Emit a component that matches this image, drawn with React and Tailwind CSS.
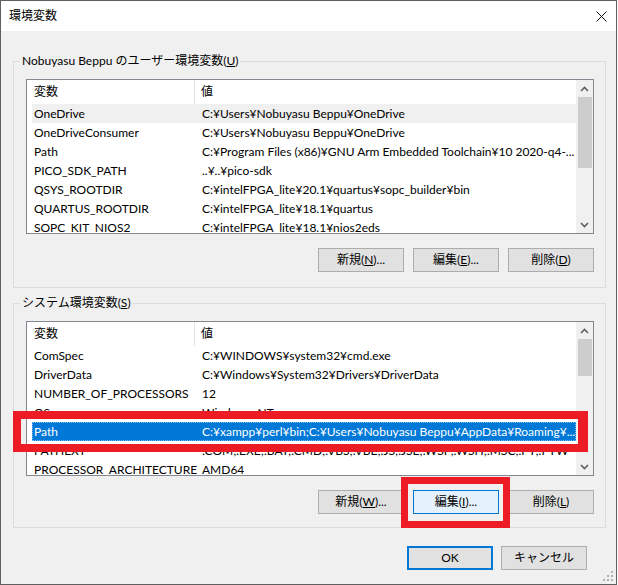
import React from 'react';

const userVars = [
  ['OneDrive', 'C:¥Users¥Nobuyasu Beppu¥OneDrive'],
  ['OneDriveConsumer', 'C:¥Users¥Nobuyasu Beppu¥OneDrive'],
  ['Path', 'C:¥Program Files (x86)¥GNU Arm Embedded Toolchain¥10 2020-q4-...'],
  ['PICO_SDK_PATH', '..¥..¥pico-sdk'],
  ['QSYS_ROOTDIR', 'C:¥intelFPGA_lite¥20.1¥quartus¥sopc_builder¥bin'],
  ['QUARTUS_ROOTDIR', 'C:¥intelFPGA_lite¥18.1¥quartus'],
  ['SOPC_KIT_NIOS2', 'C:¥intelFPGA_lite¥18.1¥nios2eds'],
];

const systemVars = [
  ['ComSpec', 'C:¥WINDOWS¥system32¥cmd.exe'],
  ['DriverData', 'C:¥Windows¥System32¥Drivers¥DriverData'],
  ['NUMBER_OF_PROCESSORS', '12'],
  ['OS', 'Windows_NT'],
  ['Path', 'C:¥xampp¥perl¥bin;C:¥Users¥Nobuyasu Beppu¥AppData¥Roaming¥...'],
  ['PATHEXT', '.COM;.EXE;.BAT;.CMD;.VBS;.VBE;.JS;.JSE;.WSF;.WSH;.MSC;.PY;.PYW'],
  ['PROCESSOR_ARCHITECTURE', 'AMD64'],
];

function Chevron({ up }) {
  return (
    <svg width="9" height="6" viewBox="0 0 9 6">
      <polyline points={up ? '1,5 4.5,1.5 8,5' : '1,1 4.5,4.5 8,1'} fill="none" stroke="#606060" strokeWidth="1.6" />
    </svg>
  );
}

function ListBox({ rows, hover, selected, thumb }) {
  return (
    <div className="ml-[6px] w-[568px] h-[155px] border border-[#828790] bg-white flex">
      <div className="flex-1 pl-[5px] overflow-hidden">
        <div className="h-[24px] flex items-center">
          <div className="w-[163px] h-full pl-[2px] flex items-center border-r border-[#e5e5e5]">変数</div>
          <div className="pl-[6px]">値</div>
        </div>
        {rows.map(([name, value], i) => (
          <div
            key={name + i}
            className={`h-[19px] flex items-center whitespace-nowrap ${i === selected ? 'bg-[#0078d7] text-white outline outline-1 outline-dotted outline-[#7fbbeb] -outline-offset-1' : i === hover ? 'bg-[#f0f0f0]' : ''}`}
          >
            <div className="w-[170px] shrink-0 pl-[2px]">{name}</div>
            <div className="overflow-hidden">{value}</div>
          </div>
        ))}
      </div>
      <div className="w-[17px] bg-[#f0f0f0] flex flex-col">
        <div className="h-[17px] flex items-center justify-center"><Chevron up /></div>
        <div className="flex-1">
          <div className={`ml-[2px] mr-[1px] bg-[#cdcdcd] ${thumb}`} />
        </div>
        <div className="h-[17px] flex items-center justify-center"><Chevron /></div>
      </div>
    </div>
  );
}

function Btn({ children, variant }) {
  const look =
    variant === 'focus'
      ? 'bg-[#e5f1fb] border border-[#0078d7]'
      : variant === 'default'
      ? 'bg-[#e1e1e1] border-2 border-[#0078d7]'
      : 'bg-[#e1e1e1] border border-[#adadad]';
  return <div className={`w-[86px] h-[24px] flex items-center justify-center ${look}`}>{children}</div>;
}

function Group({ label, children, mt, pb }) {
  return (
    <fieldset className={`ml-[12px] w-[592px] border border-[#dcdcdc] pl-[6px] pr-[11px] ${mt} ${pb}`}>
      <legend className="px-[2px] leading-[16px]">{label}</legend>
      {children}
    </fieldset>
  );
}

export default function App() {
  return (
    <div className="relative w-[617px] h-[585px] border border-[#5f5f5f] bg-[#f0f0f0] flex flex-col text-[12px] text-black font-['Lato','Noto_Sans_CJK_JP',sans-serif]">
      <div className="h-[30px] bg-white flex items-center justify-between pl-[8px] pr-[9px]">
        <span>環境変数</span>
        <svg width="11" height="11" viewBox="0 0 11 11">
          <path d="M0.5 0.5 L10.5 10.5 M10.5 0.5 L0.5 10.5" stroke="#111" strokeWidth="1" />
        </svg>
      </div>

      <Group label={<>Nobuyasu Beppu のユーザー環境変数(<span className="underline">U</span>)</>} mt="mt-[22px]" pb="pb-[15px]">
        <div className="mt-[10px]">
          <ListBox rows={userVars} hover={0} selected={-1} thumb="h-[71px]" />
        </div>
        <div className="mt-[14px] flex justify-end gap-[9px]">
          <Btn>新規(<span className="underline">N</span>)...</Btn>
          <Btn>編集(<span className="underline">E</span>)...</Btn>
          <Btn>削除(<span className="underline">D</span>)</Btn>
        </div>
      </Group>

      <Group label={<>システム環境変数(<span className="underline">S</span>)</>} mt="mt-[7px]" pb="pb-[13px]">
        <div className="mt-[10px]">
          <ListBox rows={systemVars} hover={-1} selected={4} thumb="h-[37px]" />
        </div>
        <div className="mt-[14px] flex justify-end gap-[9px]">
          <Btn>新規(<span className="underline">W</span>)...</Btn>
          <Btn variant="focus">編集(<span className="underline">I</span>)...</Btn>
          <Btn>削除(<span className="underline">L</span>)</Btn>
        </div>
      </Group>

      <div className="mt-[18px] flex justify-end gap-[8px] pr-[29px]">
        <Btn variant="default">OK</Btn>
        <Btn>キャンセル</Btn>
      </div>

      {/* annotation boxes */}
      <div className="absolute left-[12px] top-[410px] w-[575px] h-[41px] border-[8px] border-r-[10px] border-[#ed1c24]" />
      <div className="absolute left-[400px] top-[476px] w-[109px] h-[51px] border-[7px] border-[#ed1c24]" />

      <svg className="absolute right-[2px] bottom-[2px]" width="11" height="11" viewBox="0 0 11 11" fill="#b0b0b0">
        <rect x="8" y="0" width="2" height="2" />
        <rect x="4" y="4" width="2" height="2" />
        <rect x="8" y="4" width="2" height="2" />
        <rect x="0" y="8" width="2" height="2" />
        <rect x="4" y="8" width="2" height="2" />
        <rect x="8" y="8" width="2" height="2" />
      </svg>
    </div>
  );
}
